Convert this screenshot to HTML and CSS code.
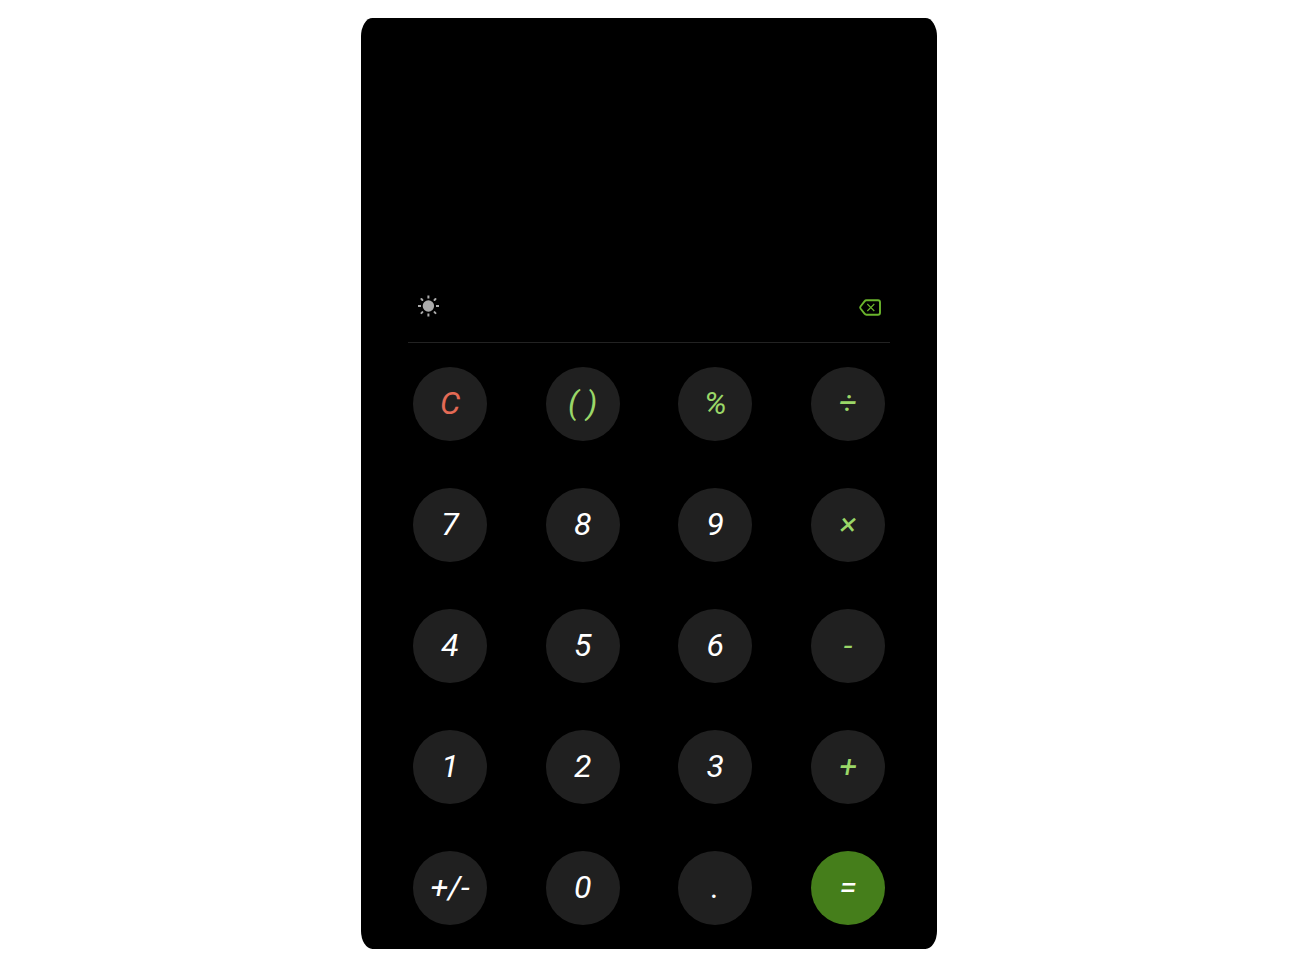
FILE: index.html
```html
<!DOCTYPE html>
<html lang="en">
<head>
<meta charset="utf-8">
<meta name="viewport" content="width=device-width, initial-scale=1">
<title>Calculator</title>
<link rel="stylesheet" href="styles.css">
</head>
<body>
<main class="calculator">
  <output class="display" aria-label="Result"></output>
  <div class="toolbar">
    <button class="tool" type="button" aria-label="Toggle theme">
      <svg class="sun" viewBox="0 0 22 22" width="22" height="22" aria-hidden="true">
        <circle cx="11.400" cy="11" r="5.700" fill="#aaa"/>
        <path d="M11.400 .5v3M11.400 18.500v3M1 11h3M19 11h3" stroke="#aaa" stroke-width="2" fill="none"/>
        <path d="M4.400 4l1 1M17.500 17.100l1 1M4.400 18.100l1-1M17.500 5l1-1" stroke="#aaa" stroke-width="2" stroke-linecap="round" fill="none"/>
      </svg>
    </button>
    <button class="tool" type="button" aria-label="Backspace">
      <svg class="erase" viewBox="0 0 24 20" width="24" height="20" aria-hidden="true">
        <path d="M8.500 4.300h11.500a2 2 0 0 1 2 2v10.400a2 2 0 0 1-2 2H8.500Q7.300 18.700 6.500 17.700L2.500 12.500Q1.800 11.500 2.500 10.500L6.500 5.300Q7.300 4.300 8.500 4.300z" fill="none" stroke="#6bb52c" stroke-width="1.900" stroke-linejoin="round"/>
        <path d="M9.300 8l7 7M16.300 8l-7 7" stroke="#6bb52c" stroke-width="1.100" fill="none"/>
      </svg>
    </button>
  </div>
  <div class="keys">
    <button class="key clear" type="button">C</button>
    <button class="key operator" type="button">( )</button>
    <button class="key operator" type="button">%</button>
    <button class="key operator" type="button">÷</button>
    <button class="key" type="button">7</button>
    <button class="key" type="button">8</button>
    <button class="key" type="button">9</button>
    <button class="key operator" type="button">×</button>
    <button class="key" type="button">4</button>
    <button class="key" type="button">5</button>
    <button class="key" type="button">6</button>
    <button class="key operator" type="button">-</button>
    <button class="key" type="button">1</button>
    <button class="key" type="button">2</button>
    <button class="key" type="button">3</button>
    <button class="key operator" type="button">+</button>
    <button class="key" type="button">+/-</button>
    <button class="key" type="button">0</button>
    <button class="key" type="button">.</button>
    <button class="key equals" type="button">=</button>
  </div>
</main>
</body>
</html>
```

FILE: styles.css
```css
* {
  box-sizing: border-box;
}

body {
  margin: 0;
  padding: 18px 16px 20px 20px;
  background: #fff;
  font-family: Roboto, sans-serif;
}

.calculator {
  max-width: 576px;
  margin: 0 auto;
  padding: 0 47px 24px;
  border-radius: 2%;
  background: #000;
}

.display {
  display: block;
  min-height: 264px;
  color: #fff;
  font-size: 48px;
  text-align: right;
}

.toolbar {
  display: flex;
  justify-content: space-between;
  align-items: center;
  height: 61px;
  padding: 0 8px 12px 9px;
  border-bottom: 1px solid #222;
}

.tool {
  display: flex;
  padding: 0;
  border: 0;
  background: none;
  cursor: pointer;
}

.keys {
  display: grid;
  grid-template-columns: repeat(4, 74px);
  justify-content: space-between;
  row-gap: 47px;
  padding: 24px 5px 0;
}

.key {
  width: 74px;
  height: 74px;
  padding: 0 0 2px;
  border: 0;
  border-radius: 50%;
  background: #202020;
  color: #fff;
  font: italic 400 32px/38px Roboto, sans-serif;
  cursor: pointer;
}

.operator {
  color: #9ad768;
}

.clear {
  color: #e46a55;
}

.equals {
  background: #457e1b;
}
```
